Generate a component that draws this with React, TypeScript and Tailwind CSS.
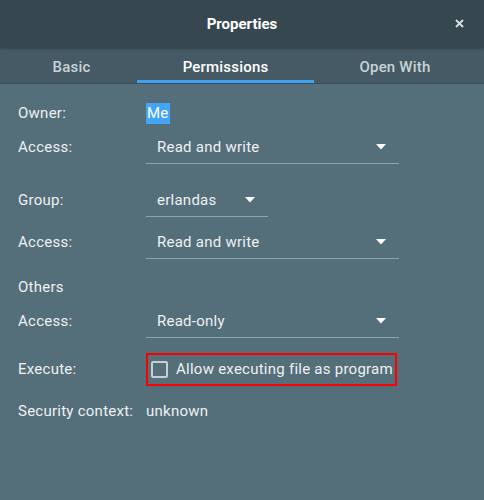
const Arrow = () => (
  <svg width="10" height="6" viewBox="0 0 10 6" className="shrink-0">
    <path d="M0 0H10L5 5.5Z" fill="#ffffff" />
  </svg>
);

const Dropdown = ({ value, width }: { value: string; width: string }) => (
  <div className={`${width} h-[33px] flex items-center justify-between pl-[11px] pr-[13px] border-b border-[#8fa3ad]`}>
    <span>{value}</span>
    <Arrow />
  </div>
);

const Row = ({ label, children, className }: { label: string; children?: React.ReactNode; className: string }) => (
  <div className={`flex items-center ${className}`}>
    <div className="w-[128px] shrink-0">{label}</div>
    {children}
  </div>
);

export default function App() {
  return (
    <div className="w-[484px] h-[500px] bg-[#546e7a] text-[#eef1f2] text-[15px] font-['Roboto',sans-serif] flex flex-col">
      <div className="h-[48px] bg-[#37474f] flex items-center justify-center relative shadow-[0_1px_2px_rgba(0,0,0,0.25)]">
        <span className="font-bold text-white">Properties</span>
        <svg width="9" height="9" viewBox="0 0 9 9" className="absolute right-[20px] top-[19px]">
          <path d="M1 1L8 8M8 1L1 8" stroke="#d5dbde" strokeWidth="2" />
        </svg>
      </div>
      <div className="h-[36px] bg-[#455a64] flex border-b border-[#3b4d56] font-medium tracking-[0.2px]">
        <div className="w-[137px] flex items-center justify-center text-[#c9d2d6] pl-[6px] pt-[4px]">Basic</div>
        <div className="w-[177px] flex items-center justify-center text-white border-b-[3px] border-[#42a1ec] pt-[7px]">Permissions</div>
        <div className="flex-1 flex items-center justify-center text-[#c9d2d6] pr-[8px] pt-[4px]">Open With</div>
      </div>
      <div className="pl-[18px] tracking-[0.25px]">
        <Row label="Owner:" className="mt-[17px] h-[24px]">
          <span className="bg-[#42a5f5] text-white h-[21px] leading-[21px] px-[1px]">Me</span>
        </Row>
        <Row label="Access:" className="mt-[6px]">
          <Dropdown value="Read and write" width="w-[253px]" />
        </Row>
        <Row label="Group:" className="mt-[20px]">
          <Dropdown value="erlandas" width="w-[122px]" />
        </Row>
        <Row label="Access:" className="mt-[9px]">
          <Dropdown value="Read and write" width="w-[253px]" />
        </Row>
        <Row label="Others" className="mt-[16px] h-[24px]" />
        <Row label="Access:" className="mt-[6px]">
          <Dropdown value="Read-only" width="w-[253px]" />
        </Row>
        <Row label="Execute:" className="mt-[15px]">
          <div className="w-[251px] h-[33px] border-2 border-[#ff0000] flex items-center pl-[3px] gap-[8px]">
            <div className="w-[17px] h-[17px] border-2 border-[#c7cfd3] rounded-[2px]" />
            <span>Allow executing file as program</span>
          </div>
        </Row>
        <Row label="Security context:" className="mt-[13px] h-[24px]">
          <span>unknown</span>
        </Row>
      </div>
    </div>
  );
}
